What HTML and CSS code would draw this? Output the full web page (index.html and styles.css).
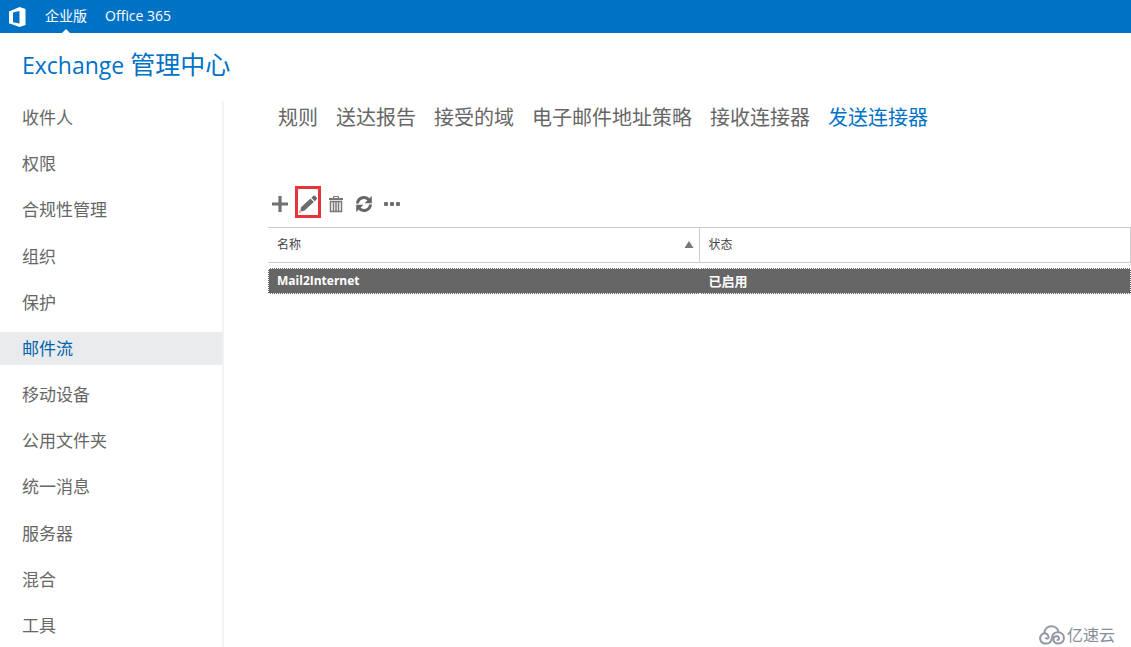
FILE: index.html
```html
<!DOCTYPE html>
<html lang="zh-CN">
<head>
<meta charset="utf-8">
<meta name="viewport" content="width=device-width, initial-scale=1">
<title>Exchange 管理中心</title>
<link rel="stylesheet" href="styles.css">
</head>
<body>
<header class="topbar">
  <a class="logo" href="#" aria-label="Office">
    <svg width="18" height="20" viewBox="0 0 18 20"><path fill="#fff" fill-rule="evenodd" d="M0 4.500 10.500 0 16.500 2v16l-6 2L0 16.200zM4 5.500v9.700l6.500 1.300V4z"/></svg>
  </a>
  <nav class="suite">
    <a class="suite-link is-current" href="#">企业版</a>
    <a class="suite-link" href="#">Office 365</a>
  </nav>
</header>
<h1 class="title"><span class="title-latin">Exchange </span>管理中心</h1>
<div class="layout">
  <nav class="sidebar">
    <a class="side-link" href="#">收件人</a>
    <a class="side-link" href="#">权限</a>
    <a class="side-link" href="#">合规性管理</a>
    <a class="side-link" href="#">组织</a>
    <a class="side-link" href="#">保护</a>
    <a class="side-link is-active" href="#">邮件流</a>
    <a class="side-link" href="#">移动设备</a>
    <a class="side-link" href="#">公用文件夹</a>
    <a class="side-link" href="#">统一消息</a>
    <a class="side-link" href="#">服务器</a>
    <a class="side-link" href="#">混合</a>
    <a class="side-link" href="#">工具</a>
  </nav>
  <main class="content">
    <nav class="tabs">
      <a class="tab" href="#">规则</a>
      <a class="tab" href="#">送达报告</a>
      <a class="tab" href="#">接受的域</a>
      <a class="tab" href="#">电子邮件地址策略</a>
      <a class="tab" href="#">接收连接器</a>
      <a class="tab is-active" href="#">发送连接器</a>
    </nav>
    <div class="toolbar">
      <button class="tool" type="button" aria-label="新建">
        <svg width="18" height="18" viewBox="0 0 18 18"><path d="M9 1v16M1 9h16" stroke="#707070" stroke-width="3.200"/></svg>
      </button>
      <button class="tool is-marked" type="button" aria-label="编辑">
        <svg width="20" height="20" viewBox="0 0 20 20"><path fill="#6c6c6c" d="M3 13.200 12.500 4.500l3.300 3.500-9.500 8.700-4 .8zM13.400 3.700l1.900-1.900q.9-.8 1.900.1l1.500 1.600q.8.900 0 1.800l-2 1.900z"/><path fill="#e9a27a" d="m1.300 16.300 2.200 1.900-2.800 1z"/></svg>
      </button>
      <button class="tool" type="button" aria-label="删除">
        <svg width="18" height="18" viewBox="0 0 18 18"><g fill="none" stroke="#777"><path d="M6.500 3V1.500h5V3"/><path d="M2 4h14" stroke-width="2"/><path d="M3.500 6.500h11v10h-11z" stroke-width="1.500"/><path d="M6.500 7v9M9 7v9M11.500 7v9" stroke-width="1.500"/></g></svg>
      </button>
      <button class="tool" type="button" aria-label="刷新">
        <svg width="18" height="18" viewBox="0 0 18 18"><path fill="none" stroke="#666" stroke-width="3" d="M2.500 8.500C3 2.500 10.500.5 14 5M15.500 9.500C15 15.500 7.500 17.500 4 13"/><path fill="#666" d="M16.800 1v7.200H9.600zM1.200 17V9.800h7.200z"/></svg>
      </button>
      <button class="tool" type="button" aria-label="更多">
        <svg width="18" height="18" viewBox="0 0 18 18"><g fill="#707070"><rect x="1" y="7" width="4" height="4" rx="1"/><rect x="7" y="7" width="4" height="4" rx="1"/><rect x="13" y="7" width="4" height="4" rx="1"/></g></svg>
      </button>
    </div>
    <table class="grid">
      <thead>
        <tr>
          <th scope="col" aria-sort="ascending"><span class="head-cell">名称<svg width="10" height="8" viewBox="0 0 10 8"><path fill="#777" d="M5 0l4.500 7h-9z"/></svg></span></th>
          <th scope="col">状态</th>
        </tr>
      </thead>
      <tbody>
        <tr class="spacer" aria-hidden="true"><td colspan="2"></td></tr>
        <tr class="row"><td class="name">Mail2Internet</td><td>已启用</td></tr>
      </tbody>
    </table>
  </main>
</div>
<div class="watermark">
  <svg width="26" height="20" viewBox="0 0 26 20"><g fill="none" stroke="#9299a3" stroke-width="2" stroke-linecap="round"><path d="M5.500 7.500C6 -.5 18-1 19.500 7"/><path d="M7 13.200c1.500 1 3-.2 2.500-1.700C8.500 8.500 5.500 7.300 3 9.200c-3 2.500-2.300 8.300 2 9.300h3c3.500-.3 4.500-3 4.800-5.200.3-3 2.200-6 6.200-6 7.500 0 8 11 .8 11.200-3.800.2-5.800-2-5.300-4.800.5-3 4.800-3.500 5.500-.8.300 1.300-.5 2-1.500 2"/></g></svg>
  <span>亿速云</span>
</div>
</body>
</html>
```
FILE: styles.css
```css
* { box-sizing: border-box; }

body {
  margin: 0;
  min-height: 100vh;
  display: flex;
  flex-direction: column;
  background: #fff;
  color: #666;
  font-family: "Open Sans", "Noto Sans CJK SC", sans-serif;
}

a { color: inherit; text-decoration: none; }

.topbar {
  display: flex;
  align-items: stretch;
  height: 33px;
  padding-left: 9px;
  background: #0072c6;
  color: #fff;
}

.logo { display: flex; align-items: center; }

.suite {
  display: flex;
  gap: 18px;
  margin-left: 18px;
}

.suite-link {
  position: relative;
  font-size: 14px;
  line-height: 32px;
}

.suite-link.is-current::after {
  content: "";
  position: absolute;
  left: 50%;
  bottom: 0;
  margin-left: -4px;
  border: 4px solid transparent;
  border-top: 0;
  border-bottom-color: #fff;
}

.title {
  margin: 0;
  padding: 15px 22px 0;
  height: 68px;
  color: #0072c6;
  font-size: 25px;
  font-weight: 400;
  line-height: 32px;
}

.title-latin { font-size: 23px; }

.layout {
  flex: 1;
  display: flex;
}

.sidebar {
  flex: none;
  width: 224px;
  display: flex;
  flex-direction: column;
  justify-content: space-between;
  padding-bottom: 5px;
  border-right: 2px solid #f3f3f3;
}

.side-link {
  padding-left: 22px;
  font-size: 17px;
  line-height: 33px;
}

.side-link.is-active {
  background: #eaebec;
  color: #0064ad;
}

.content {
  flex: 1;
  min-width: 0;
  padding-left: 44px;
}

.tabs {
  display: flex;
  gap: 18px;
  padding-left: 10px;
  font-size: 20px;
  line-height: 34px;
  white-space: nowrap;
}

.tab.is-active { color: #0072c6; }

.toolbar {
  display: flex;
  align-items: center;
  gap: 2px;
  margin: 51px 0 9px -1px;
}

.tool {
  display: flex;
  align-items: center;
  justify-content: center;
  width: 26px;
  height: 32px;
  padding: 4px 0 0;
  border: 0;
  background: none;
}

.tool.is-marked { border: 3px solid #e5343a; }

.grid {
  width: 100%;
  table-layout: fixed;
  border-collapse: separate;
  border-spacing: 0;
  font-size: 13px;
}

.grid th {
  height: 36px;
  padding: 0 5px 0 9px;
  border: solid #ccc;
  border-width: 1px 1px 1px 0;
  color: #444;
  font-size: 12px;
  font-weight: 400;
  line-height: 18px;
  text-align: left;
}

.head-cell {
  display: flex;
  align-items: center;
  justify-content: space-between;
}

.spacer td { height: 5px; padding: 0; }

.row td {
  height: 26px;
  padding: 0 9px;
  background: #666;
  border: dotted #fff;
  border-width: 1px 0;
  color: #fff;
  font-weight: 600;
  line-height: 24px;
}

.row td:first-child { border-left-width: 1px; padding-left: 8px; }
.row td:last-child { border-right-width: 1px; }
.row .name { font-size: 12px; font-weight: 700; }

.watermark {
  position: absolute;
  right: 16px;
  bottom: 0;
  display: flex;
  align-items: center;
  gap: 2px;
  color: #858d98;
  font-size: 16px;
  line-height: 24px;
}
```
